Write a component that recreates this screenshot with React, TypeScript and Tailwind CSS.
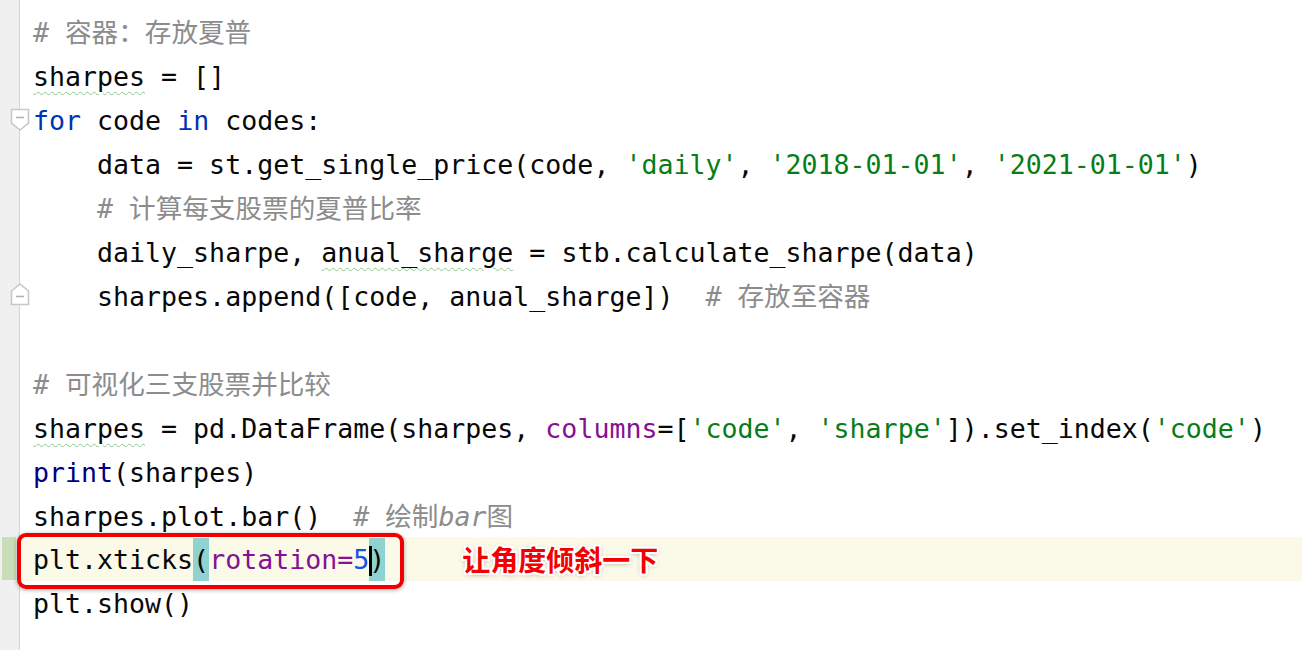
const mono = "font-['DejaVu_Sans_Mono','Noto_Sans_CJK_SC',monospace]";

const C = ({ children }: { children: React.ReactNode }) => <span className="text-[#8c8c8c]">{children}</span>;
const K = ({ children }: { children: React.ReactNode }) => <span className="text-[#0033b3]">{children}</span>;
const S = ({ children }: { children: React.ReactNode }) => <span className="text-[#067d17]">{children}</span>;
const P = ({ children }: { children: React.ReactNode }) => <span className="text-[#871094]">{children}</span>;
const W = ({ children }: { children: React.ReactNode }) => (
  <span className="underline decoration-wavy decoration-[#8cc98c] decoration-1 underline-offset-[5px]">{children}</span>
);

// matched bracket: highlight covers the full row height
const B = ({ children, caret }: { children: React.ReactNode; caret?: boolean }) => (
  <span className="relative inline-block bg-[#8fd3d0] leading-[43px]">
    {caret && <span className="absolute left-0 top-[8px] h-[30px] w-[3px] bg-black" />}
    {children}
  </span>
);

function FoldDown() {
  return (
    <svg width="20" height="24" viewBox="0 0 20 24" className="absolute left-[10px] top-[10px]">
      <path d="M1.5 1.5 H18.5 V15 L10 22 L1.5 15 Z" fill="#fff" stroke="#c8c8c8" strokeWidth="1.6" />
      <path d="M6 9.5 H14" stroke="#b4b4b4" strokeWidth="1.6" />
    </svg>
  );
}

function FoldUp() {
  return (
    <svg width="20" height="24" viewBox="0 0 20 24" className="absolute left-[10px] top-[8px]">
      <path d="M1.5 9 L10 2 L18.5 9 V22.5 H1.5 Z" fill="#fff" stroke="#c8c8c8" strokeWidth="1.6" />
      <path d="M6 14.5 H14" stroke="#b4b4b4" strokeWidth="1.6" />
    </svg>
  );
}

type Line = { code: React.ReactNode; fold?: "down" | "up"; current?: boolean };

const lines: Line[] = [
  { code: <C># 容器：存放夏普</C> },
  { code: <><W>sharpes</W> = []</> },
  { code: <><K>for</K> code <K>in</K> codes:</>, fold: "down" },
  { code: <>    data = st.get_single_price(code, <S>'daily'</S>, <S>'2018-01-01'</S>, <S>'2021-01-01'</S>)</> },
  { code: <>    <C># 计算每支股票的夏普比率</C></> },
  { code: <>    daily_sharpe, <W>anual_sharge</W> = stb.calculate_sharpe(data)</> },
  { code: <>    sharpes.append([code, anual_sharge])  <C># 存放至容器</C></>, fold: "up" },
  { code: "" },
  { code: <C># 可视化三支股票并比较</C> },
  { code: <><W>sharpes</W> = pd.DataFrame(sharpes, <P>columns</P>=[<S>'code'</S>, <S>'sharpe'</S>]).set_index(<S>'code'</S>)</> },
  { code: <><span className="text-[#000080]">print</span>(sharpes)</> },
  { code: <>sharpes.plot.bar()  <C># 绘制<span className="italic">bar</span>图</C></> },
  {
    code: (
      <>
        plt.xticks<B>(</B>
        <P>rotation=</P>
        <span className="text-[#1750eb]">5</span>
        <B caret>)</B>
      </>
    ),
    current: true,
  },
  { code: "plt.show()" },
];

export default function App() {
  return (
    <div className={`relative flex h-[650px] w-full overflow-hidden bg-white ${mono} text-[26.6px] text-[#080808]`}>
      <div className="w-[20px] shrink-0 border-r border-[#d6d6d6] bg-[#f0f0f0] pt-[10px]">
        {lines.map((l, i) => (
          <div key={i} className="relative h-[44px]">
            {l.current && <div className="absolute left-[2px] top-[-1px] h-[43px] w-[14px] bg-[#c8ddb8]" />}
          </div>
        ))}
      </div>

      <div className="flex-1 pt-[10px]">
        {lines.map((l, i) => (
          <div
            key={i}
            className={`flex h-[44px] whitespace-pre pl-[13px] ${l.current ? "mt-[-1px] h-[43px] items-center bg-[#fbf9e8]" : "items-center"}`}
          >
            <span className="leading-[43px]">{l.code}</span>
            {l.current && (
              <span className="ml-[77px] font-['Noto_Sans_CJK_SC',sans-serif] text-[28px] font-bold leading-none text-[#f50000] [text-shadow:2px_0_0_#fff,-2px_0_0_#fff,0_2px_0_#fff,0_-2px_0_#fff,2px_2px_0_#fff,-2px_-2px_0_#fff,2px_-2px_0_#fff,-2px_2px_0_#fff,0_1px_5px_rgba(0,0,0,0.5)]">
                让角度倾斜一下
              </span>
            )}
          </div>
        ))}
      </div>

      {/* fold markers sit over the gutter edge */}
      <div className="pointer-events-none absolute left-0 top-[10px] w-[40px]">
        {lines.map((l, i) => (
          <div key={i} className="relative h-[44px]">
            {l.fold === "down" && <FoldDown />}
            {l.fold === "up" && <FoldUp />}
          </div>
        ))}
      </div>

      {/* red annotation frame */}
      <div className="pointer-events-none absolute left-[17px] top-[533px] h-[56px] w-[387px] rounded-[9px] border-4 border-[#f00000] shadow-[0_1px_4px_rgba(0,0,0,0.35)]" />
    </div>
  );
}
